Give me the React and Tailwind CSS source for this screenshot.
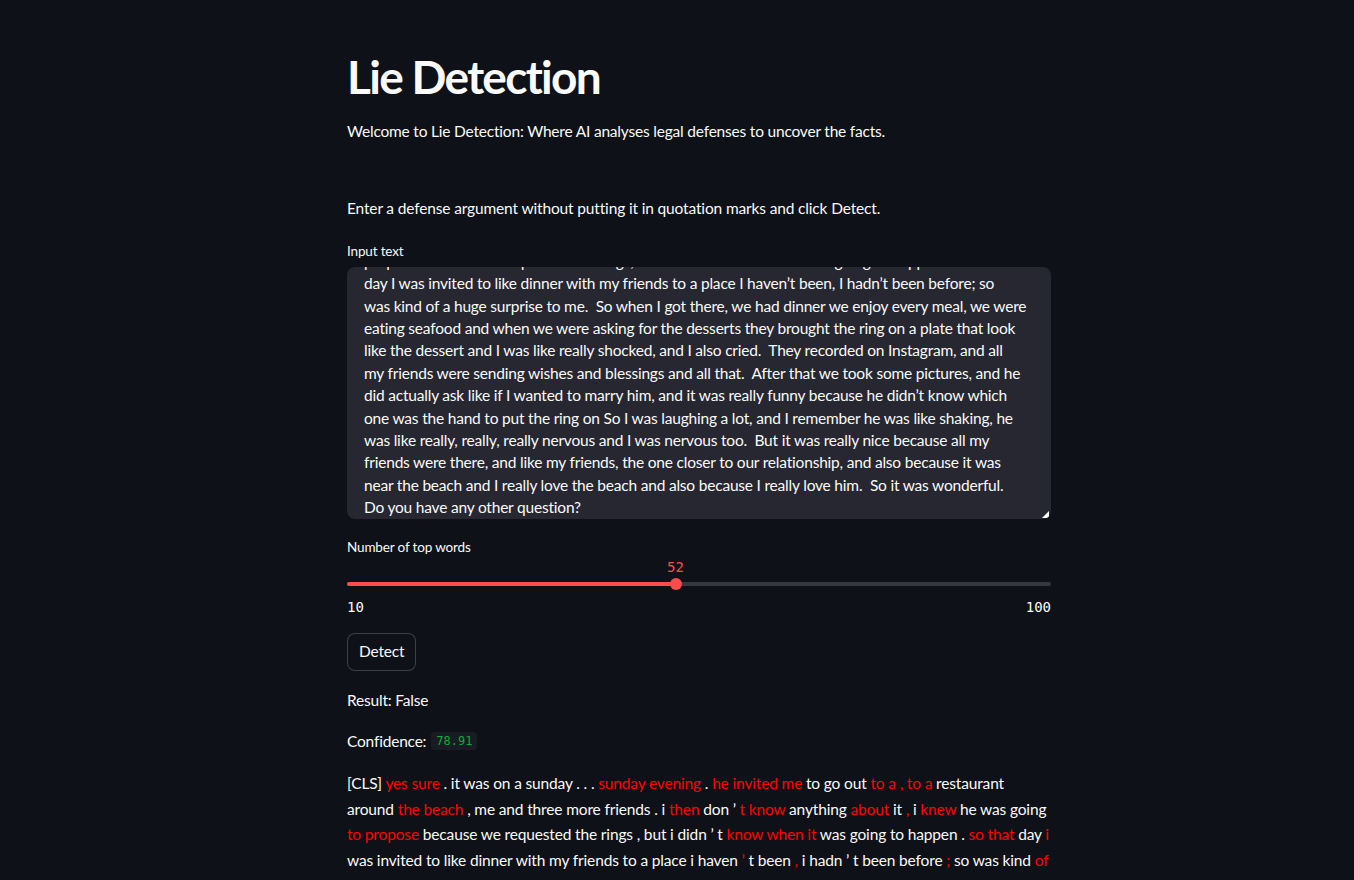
import React from "react";

const FONT = { fontFamily: "Lato, 'Noto Sans', sans-serif" };
const MONO = { fontFamily: "'DejaVu Sans Mono', 'Liberation Mono', monospace" };

const taLines = [
  "propose because we requested the rings, but I didn’t know when it was going to happen. So that",
  "day I was invited to like dinner with my friends to a place I haven’t been, I hadn’t been before; so",
  "was kind of a huge surprise to me.  So when I got there, we had dinner we enjoy every meal, we were",
  "eating seafood and when we were asking for the desserts they brought the ring on a plate that look",
  "like the dessert and I was like really shocked, and I also cried.  They recorded on Instagram, and all",
  "my friends were sending wishes and blessings and all that.  After that we took some pictures, and he",
  "did actually ask like if I wanted to marry him, and it was really funny because he didn’t know which",
  "one was the hand to put the ring on So I was laughing a lot, and I remember he was like shaking, he",
  "was like really, really, really nervous and I was nervous too.  But it was really nice because all my",
  "friends were there, and like my friends, the one closer to our relationship, and also because it was",
  "near the beach and I really love the beach and also because I really love him.  So it was wonderful.",
  "Do you have any other question?",
];

// [text, isRed]
const hlLines = [
  [["[CLS] ", 0], ["yes sure", 1], [" . it was on a sunday . . . ", 0], ["sunday evening", 1], [" . ", 0], ["he invited me", 1], [" to go out ", 0], ["to a , to a", 1], [" restaurant", 0]],
  [["around ", 0], ["the beach", 1], [" , me and three more friends . i ", 0], ["then", 1], [" don ’ ", 0], ["t know", 1], [" anything ", 0], ["about", 1], [" it ", 0], [",", 1], [" i ", 0], ["knew", 1], [" he was going", 0]],
  [["to propose", 1], [" because we requested the rings , but i didn ’ t ", 0], ["know when it", 1], [" was going to happen . ", 0], ["so that", 1], [" day ", 0], ["i", 1]],
  [["was invited to like dinner with my friends to a place i haven ", 0], ["’", 1], [" t been ", 0], [",", 1], [" i hadn ’ t been before ", 0], [";", 1], [" so was kind ", 0], ["of", 1]],
  [["a huge ", 0], ["surprise", 1], [" to me . so when i got there , we had dinner we enjoy every meal , we", 0]],
];

export default function App() {
  return (
    <div className="min-h-screen w-full bg-[#0e1117] text-[#fafafa]" style={FONT}>
      <div className="ml-[347px] w-[704px] pt-[49px] pb-10">
        <h1 className="text-[46px] font-bold leading-[55px] tracking-[-1.7px]">Lie Detection</h1>
        <p className="mt-[15px] text-[15.5px] leading-[25.6px] tracking-[-0.2px]">
          Welcome to Lie Detection: Where AI analyses legal defenses to uncover the facts.
        </p>
        <p className="mt-[51px] text-[15.5px] leading-[25.6px] tracking-[-0.15px]">
          Enter a defense argument without putting it in quotation marks and click Detect.
        </p>

        <div className="mt-[19px] text-[13.5px] leading-[22.4px] tracking-[-0.15px]">Input text</div>
        <div className="relative mt-[4px] h-[252px] overflow-hidden rounded-lg bg-[#262730]">
          <div className="flex h-full flex-col justify-end pb-0 pl-[17px] pr-4">
            {taLines.map((l, i) => (
              <div key={i} className="shrink-0 whitespace-pre text-[15.5px] leading-[22.4px] tracking-[-0.2px]">
                {l}
              </div>
            ))}
          </div>
          <svg className="absolute bottom-[1px] right-[2px]" width="7" height="7" viewBox="0 0 7 7">
            <path d="M7 0 L7 7 L0 7 Z" fill="#fafafa" />
          </svg>
        </div>

        <div className="mt-[17px] text-[13.5px] leading-[22.4px] tracking-[-0.15px]">Number of top words</div>
        <div className="relative mt-[24px] h-[4px] rounded-full bg-[#363840]">
          <div className="absolute left-0 top-0 h-[4px] w-[46.67%] rounded-full bg-[#ff4b4b]" />
          <div className="absolute left-[46.67%] top-1/2 h-[12px] w-[12px] -translate-x-1/2 -translate-y-1/2 rounded-full bg-[#ff4b4b]" />
          <div
            className="absolute left-[46.67%] bottom-[9px] -translate-x-1/2 text-[14px] leading-[20px] text-[#ff4b4b]"
            style={MONO}
          >
            52
          </div>
        </div>
        <div className="mt-[11px] flex justify-between text-[14px] leading-[20px]" style={MONO}>
          <span>10</span>
          <span>100</span>
        </div>

        <button className="mt-[16px] flex h-[38px] items-center rounded-lg border border-[#fafafa]/20 bg-[#0e1117] px-[11px] text-[15.5px] tracking-[-0.2px]">
          Detect
        </button>

        <p className="mt-[17px] text-[15.5px] leading-[25.6px] tracking-[-0.2px]">Result: False</p>
        <p className="mt-[15px] flex items-center text-[15.5px] leading-[25.6px] tracking-[-0.2px]">
          Confidence:
          <span
            className="ml-[5px] rounded bg-[#1a1c23] px-[5px] text-[12px] leading-[18px] tracking-normal text-[#09ab3b]"
            style={MONO}
          >
            78.91
          </span>
        </p>

        <div className="mt-[17px] text-[15.5px] leading-[25.6px] tracking-[-0.15px]">
          {hlLines.map((line, i) => (
            <div key={i} className="whitespace-pre">
              {line.map(([t, r], j) => (
                <span key={j} className={r ? "text-[#ff0000]" : ""}>
                  {t}
                </span>
              ))}
            </div>
          ))}
        </div>
      </div>
    </div>
  );
}
